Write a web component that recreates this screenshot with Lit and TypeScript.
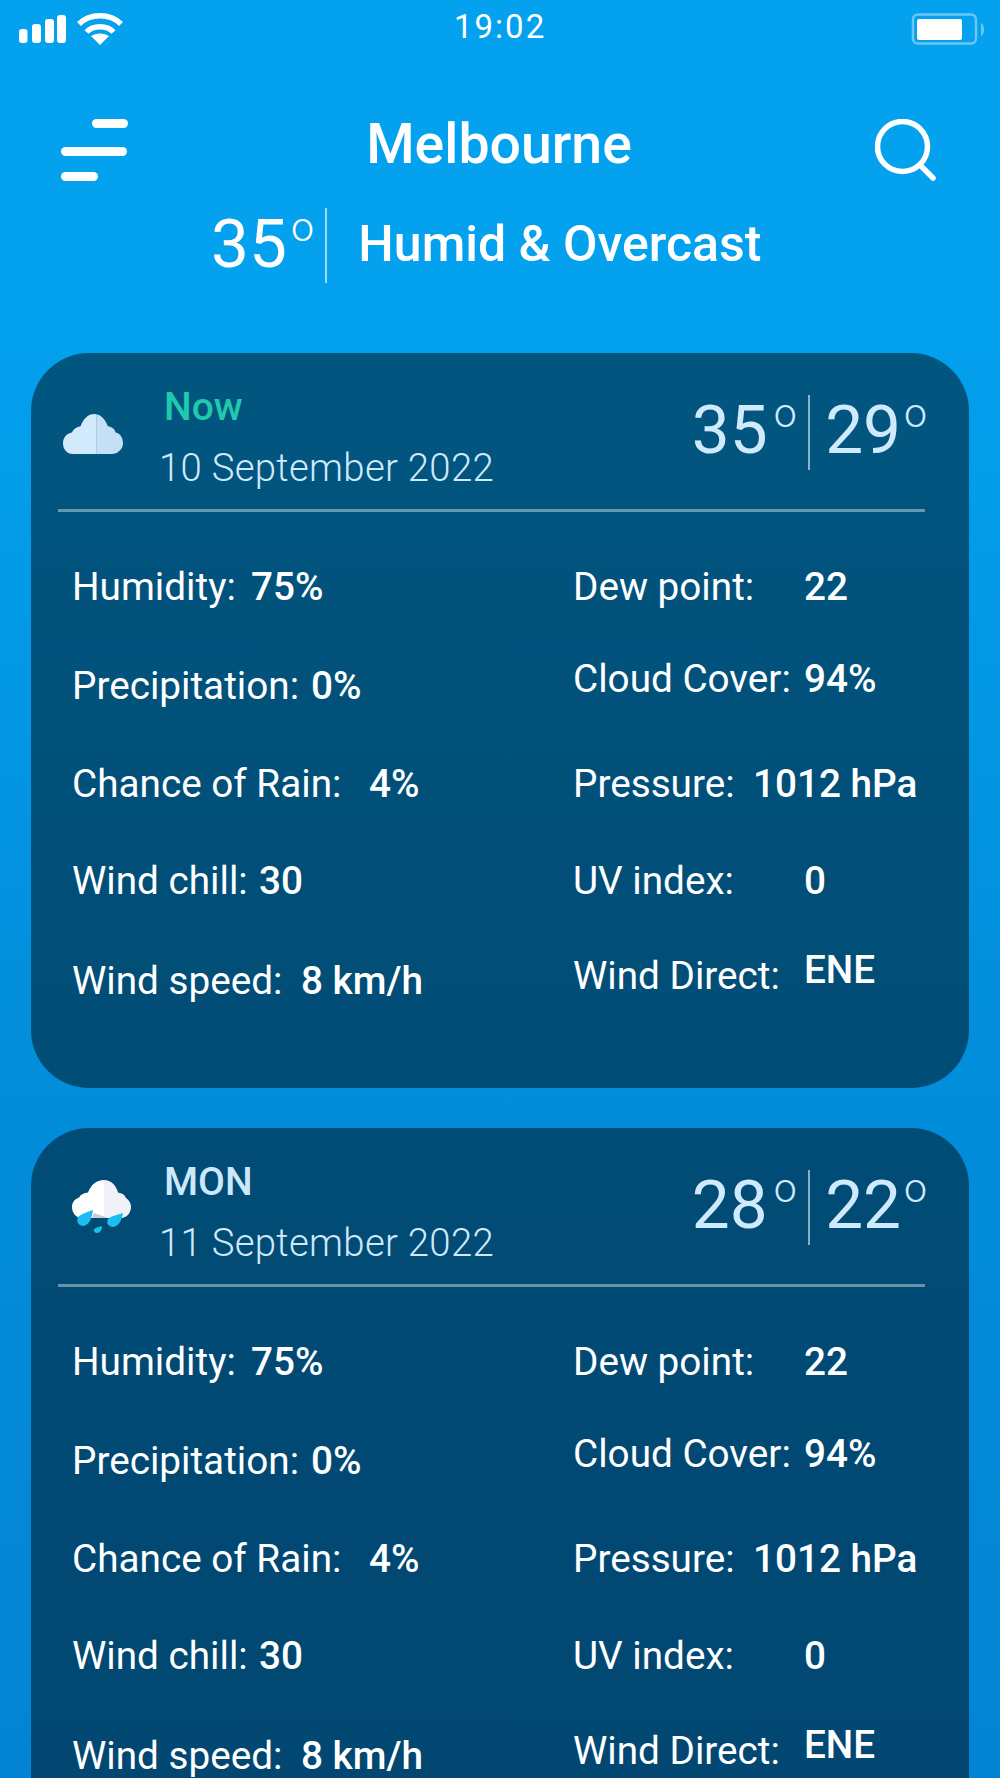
import { LitElement, html, css } from "lit";
import { customElement } from "lit/decorators.js";

const cloud = html`<svg class="wx cl" width="60" height="40" viewBox="0 0 61.500 41" preserveAspectRatio="none">
  <defs><clipPath id="c"><path d="M10 41 C4 41 0 36 0 30 C0 24 4 20 9 19 C11 15 14 13 18 12.500 C21 4.500 26 0 32 0 C38 0 43 4.500 46 12.500 C50 13 53 15 54 19 C58.500 20 61.500 24 61.500 30 C61.500 36 56 41 50 41 Z"/></clipPath></defs>
  <g clip-path="url(#c)"><rect width="34" height="42" fill="#d2eafb"/><rect x="34" width="30" height="42" fill="#c5dff4"/></g>
</svg>`;

const rain = html`<svg class="wx rn" width="59" height="53" viewBox="0 0 59 53">
  <defs><clipPath id="r"><path d="M10 38 C4 38 0 33 0 27 C0 22 3 19 7 17.500 C9 14 12 13 16 12.500 C19 5 24 0 32 0 C39 0 44 5 46 12.500 C50 13 53 15 54 18 C57 20 59 23 59 27 C59 33 55 37 50 38 Z"/></clipPath></defs>
  <g clip-path="url(#r)"><rect width="32" height="40" fill="#ffffff"/><rect x="32" width="28" height="40" fill="#f1f2f8"/><path d="M20 38 L22 33 L36 38 Z" fill="#c9ccd8"/></g>
  <path d="M21 30 C20 37 18 44 12 46 C6 46 4 41 6 37 C9 34 15 32 21 30 Z" fill="#1cbdf0"/>
  <path d="M51 33 C50 39 48 45 42 47 C36 47 34 43 36 39 C39 36 45 35 51 33 Z" fill="#1cbdf0"/>
  <path d="M30 46 C30 50 28 53 25 53 C22 53 21 50 23 48.500 C25 47 28 46.500 30 46 Z" fill="#1cbdf0"/>
</svg>`;

type Card = { label: string; now: boolean; date: string; hi: string; lo: string; icon: unknown };

const cards: Card[] = [
  { label: "Now", now: true, date: "10 September 2022", hi: "35", lo: "29", icon: cloud },
  { label: "MON", now: false, date: "11 September 2022", hi: "28", lo: "22", icon: rain },
];

@customElement("app-root")
export class AppRoot extends LitElement {
  static styles = css`
    :host {
      display: block; width: 1000px; height: 1778px; overflow: hidden;
      font-family: Roboto, "Liberation Sans", sans-serif; color: #fff;
      background: linear-gradient(180deg, #03a1ee 0%, #03a1ee 17%, #028edb 59%, #0384d3 100%);
    }
    .status { height: 54px; position: relative; display: flex; align-items: center; justify-content: space-between; padding: 3px 15px 0 19px; box-sizing: border-box; }
    .sl { display: flex; align-items: center; gap: 11px; }
    .time { position: absolute; left: 454px; top: 11px; font-size: 33px; line-height: 32px; letter-spacing: 2px; }
    .nav { display: flex; justify-content: space-between; align-items: flex-start; padding: 65px 64px 0 61px; height: 100px; box-sizing: border-box; position: relative; }
    .title { position: absolute; left: 0; right: 2px; top: 59px; text-align: center; font-size: 55.4px; line-height: 64px; font-weight: 500; }
    .sub { display: flex; align-items: center; height: 76px; padding-left: 211px; margin-top: 52px; }
    .cards { display: flex; flex-direction: column; gap: 40px; padding: 0 31px; margin-top: 71px; }
    .big { font-size: 67.5px; font-weight: 400; line-height: 76px; white-space: nowrap; }
    .deg { display: inline-block; font-size: 41px; font-weight: 300; vertical-align: 26px; line-height: 0; margin-left: 4px; }
    .vb { width: 2.5px; height: 75px; background: rgba(255,255,255,.6); margin: 3px 31px 0 11px; }
    .cond { font-size: 50px; font-weight: 500; line-height: 64px; }
    .card { background: rgba(0,0,0,.46); border-radius: 58px; height: 735px; box-sizing: border-box; padding: 0 44px 0 27px; }
    .head { height: 156px; border-bottom: 3px solid rgba(255,255,255,.4); display: flex; box-sizing: content-box; }
    .wx-box { width: 75px; box-sizing: border-box; }
    .wx { display: block; }
    .wx.cl { margin: 61px 0 0 5px; }
    .wx.rn { margin: 52px 0 0 14px; }
    .names { padding: 33px 0 0 26px; }
    .label { font-size: 39px; line-height: 42px; font-weight: 500; color: #cce9fc; padding-left: 5px; }
    .label.now { color: #1fc9ac; }
    .date { font-size: 38.3px; font-weight: 300; line-height: 42px; color: #cfe9fb; margin-top: 19px; letter-spacing: .3px; }
    .temps { margin-left: auto; display: flex; align-items: center; color: #cfeafd; margin-right: -2px; height: 80px; margin-top: 37px; }
    .temps .deg { margin-left: 6px; }
    .temps .big:last-child .deg { margin-left: 3px; }
    .temps .vb { background: rgba(255,255,255,.55); margin: 4px 15px 0 11px; }
    .grid { display: flex; padding-top: 54px; }
    .col { display: flex; flex-direction: column; }
    .col.l { width: 515px; padding-left: 14px; box-sizing: border-box; }
    .row { font-size: 38.7px; line-height: 42px; white-space: nowrap; display: flex; }
    .row b { font-weight: 500; }
    .row b.raised { margin-top: -6px; }
  `;

  private cell(k: string, v: string, keyW: number, top: number, raised = false) {
    return html`<div class="row" style="margin-top:${top}px"><span style="min-width:${keyW}px">${k}</span><b class=${raised ? "raised" : ""}>${v}</b></div>`;
  }

  render() {
    return html`
      <div class="status">
        <div class="sl">
          <svg width="47" height="28" viewBox="0 0 47 28"><g fill="#fff"><rect x="0" y="14" width="8.500" height="14" rx="3"/><rect x="13" y="9" width="9" height="19" rx="3"/><rect x="26" y="4" width="9" height="24" rx="3"/><rect x="38" y="0" width="9" height="28" rx="3"/></g></svg>
          <svg width="46" height="34" viewBox="0 0 46 34" fill="none" stroke="#fff" stroke-width="5.500"><path d="M2 12 C13 1 33 1 44 12"/><path d="M9.500 20 C16 13 30 13 36.500 20"/><path d="M23 33 L14 24 C19 20.500 27 20.500 32 24 Z" fill="#fff" stroke="none"/></svg>
        </div>
        <div class="time">19:02</div>
        <svg width="74" height="32" viewBox="0 0 74 32"><rect x="2" y="1.500" width="63" height="29" rx="5" fill="none" stroke="#6cc6f5" stroke-width="2.500"/><rect x="6" y="6" width="45" height="21" rx="2" fill="#fff"/><path d="M70 10 C74 12 74 21 70 23 Z" fill="#6cc6f5"/></svg>
      </div>
      <div class="nav">
        <svg width="67" height="62" viewBox="0 0 67 62"><g fill="#fff"><rect x="31" y="0" width="36" height="9" rx="4.500"/><rect x="0" y="28" width="66" height="9" rx="4.500"/><rect x="0" y="53" width="37" height="9" rx="4.500"/></g></svg>
        <div class="title">Melbourne</div>
        <svg width="61" height="62" viewBox="0 0 61 62" fill="none" stroke="#fff" stroke-width="5.500" stroke-linecap="round"><circle cx="27.500" cy="27.500" r="25"/><path d="M45 46 L58 59"/></svg>
      </div>
      <div class="sub">
        <div class="big">35<span class="deg">o</span></div>
        <div class="vb"></div>
        <div class="cond">Humid &amp; Overcast</div>
      </div>
      <div class="cards">
        ${cards.map((c) => html`
          <div class="card">
            <div class="head">
              <div class="wx-box">${c.icon}</div>
              <div class="names">
                <div class="label ${c.now ? "now" : ""}">${c.label}</div>
                <div class="date">${c.date}</div>
              </div>
              <div class="temps">
                <div class="big">${c.hi}<span class="deg">o</span></div>
                <div class="vb"></div>
                <div class="big">${c.lo}<span class="deg">o</span></div>
              </div>
            </div>
            <div class="grid">
              <div class="col l">
                ${this.cell("Humidity:", "75%", 179, 0)}
                ${this.cell("Precipitation:", "0%", 239, 57)}
                ${this.cell("Chance of Rain:", "4%", 297, 56)}
                ${this.cell("Wind chill:", "30", 187, 55)}
                ${this.cell("Wind speed:", "8 km/h", 229, 58)}
              </div>
              <div class="col">
                ${this.cell("Dew point:", "22", 231, 0)}
                ${this.cell("Cloud Cover:", "94%", 231, 50)}
                ${this.cell("Pressure:", "1012 hPa", 180, 63)}
                ${this.cell("UV index:", "0", 231, 55)}
                ${this.cell("Wind Direct:", "ENE", 231, 53, true)}
              </div>
            </div>
          </div>`)}
      </div>
    `;
  }
}
